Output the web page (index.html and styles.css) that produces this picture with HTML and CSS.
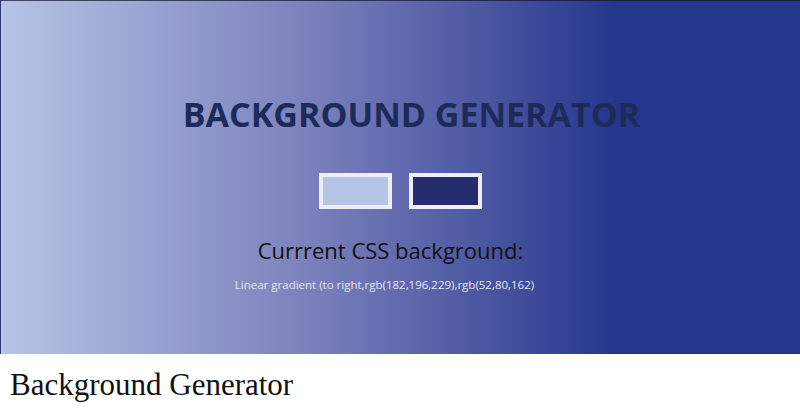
FILE: index.html
```html
<!DOCTYPE html>
<html>
<head>
<meta charset="utf-8">
<link rel="stylesheet" href="styles.css">
</head>
<body>
<div class="hero">
  <h1 class="title">BACKGROUND GENERATOR</h1>
  <div class="swatches">
    <div class="swatch swatch-light"></div>
    <div class="swatch swatch-dark"></div>
  </div>
  <h3 class="current">Currrent CSS background:</h3>
  <p class="css-text">Linear gradient (to right,rgb(182,196,229),rgb(52,80,162)</p>
</div>
<h2 class="footer-title">Background Generator</h2>
</body>
</html>
```

FILE: styles.css
```css
html, body {
  margin: 0;
  padding: 0;
  background: #fff;
}
.hero {
  height: 354px;
  box-sizing: border-box;
  padding-top: 90px;
  text-align: center;
  font-family: "Open Sans", sans-serif;
  border-top: 1px solid rgba(20, 20, 40, 0.7);
  border-left: 1px solid rgba(60, 60, 80, 0.35);
  background: linear-gradient(to right, rgb(182,196,229) 0%, rgb(120,126,186) 40%, rgb(37,54,140) 77%, rgb(37,54,140) 100%);
}
.title {
  margin: 0;
  padding-left: 22px;
  font-size: 34px;
  line-height: 47px;
  font-weight: 700;
  color: #1c2b5a;
}
.swatches {
  margin-top: 35px;
  display: flex;
  justify-content: center;
  gap: 17px;
}
.swatch {
  width: 73px;
  height: 36px;
  box-sizing: border-box;
  border: 4px solid #eeeef6;
}
.swatch-light { background: rgb(182,196,229); }
.swatch-dark { background: rgb(38,45,110); }
.current {
  margin: 25px 0 0;
  padding-right: 20px;
  font-size: 22px;
  line-height: 32px;
  font-weight: 400;
  color: #111;
}
.css-text {
  margin: 11px 0 0;
  padding-right: 32px;
  font-size: 11.5px;
  line-height: 16px;
  color: #e2e5f2;
}
.footer-title {
  margin: 14px 0 0;
  padding-left: 10px;
  font-family: "Liberation Serif", serif;
  font-weight: 400;
  font-size: 31px;
  line-height: 34px;
  color: #111;
}
```
